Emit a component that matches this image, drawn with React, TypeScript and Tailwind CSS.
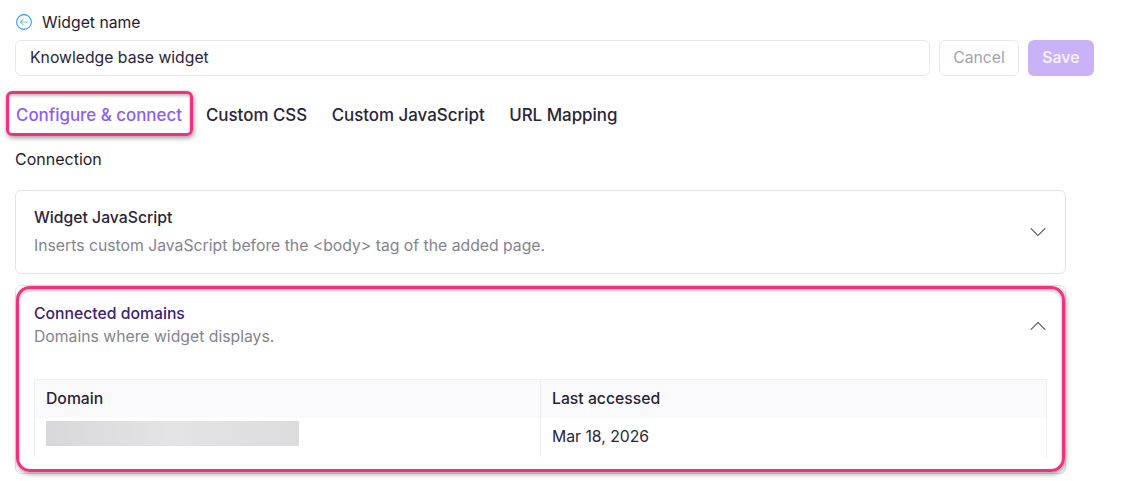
import { ChevronDown, ChevronUp } from 'lucide-react';

const highlight = 'pointer-events-none absolute border-[3px] border-[#f1317f] shadow-[1px_2px_5px_rgba(0,0,0,0.4),inset_0_2px_3px_rgba(0,0,0,0.25)]';

function BackIcon() {
    return (
        <svg width="16" height="16" viewBox="0 0 16 16" fill="none" stroke="#2e9bf0" strokeWidth="1.1" strokeLinecap="round" strokeLinejoin="round">
            <circle cx="8" cy="8" r="7.4" />
            <path d="M11.8 8H4.4M7 5.4 4.4 8 7 10.6" stroke="#7cc0f5" />
        </svg>
    );
}

export default function App() {
    return (
        <div className="relative h-[481px] w-[1144px] overflow-hidden bg-white pl-[15px] font-['Inter',sans-serif] text-[15.75px] text-[#1f1b2e]">
            <div className="flex h-[40px] items-start pt-[14px] pl-px">
                <BackIcon />
                <span className="ml-[10px] leading-[17px]">Widget name</span>
            </div>

            <div className="flex w-[1079px] gap-[9px]">
                <div className="flex h-[36px] flex-1 items-center rounded-md border border-[#e8e8ec] pl-[14px] text-[#2a2438]">
                    Knowledge base widget
                </div>
                <button className="h-[36px] w-[80px] rounded-md border border-[#e8e8ec] text-[#a3a3ab]">Cancel</button>
                <button className="h-[36px] w-[66px] rounded-md bg-[#c9b2f7] font-semibold text-[#f6f1fe]">Save</button>
            </div>

            <div className="mt-[25px] flex h-[48px] w-fit items-start text-[16.9px] font-medium leading-[28px] text-[#2a2438]">
                <span className="ml-px mr-[24px] border-b border-[#7c3aed] pb-[5px] text-[#8b5cf6]">Configure &amp; connect</span>
                <span className="mr-[24.5px]">Custom CSS</span>
                <span className="mr-[24.5px]">Custom JavaScript</span>
                <span>URL Mapping</span>
            </div>

            <p className="text-[16px] leading-[20px]">Connection</p>

            <div className="mt-[21px] flex h-[84px] w-[1051px] items-center justify-between rounded-md border border-[#e4e3ea] pl-[18px] pr-[13px]">
                <div>
                    <p className="font-medium leading-[20px] text-[#2a2438]">Widget JavaScript</p>
                    <p className="mt-[8px] leading-[20px] text-[#85838f]">Inserts custom JavaScript before the &lt;body&gt; tag of the added page.</p>
                </div>
                <ChevronDown size={28} strokeWidth={0.9} className="text-[#3a2a66]" />
            </div>

            <div className="mt-[11px] h-[189px] w-[1051px] rounded-md border border-[#e4e3ea] pl-[18px] pr-[18px] pt-[18px]">
                <div className="flex h-[75px] items-start justify-between">
                    <div>
                        <p className="font-medium leading-[20px] text-[#3b2270]">Connected domains</p>
                        <p className="mt-[3px] leading-[20px] text-[#85838f]">Domains where widget displays.</p>
                    </div>
                    <ChevronUp size={28} strokeWidth={0.9} className="-mr-[5px] mt-[8px] text-[#3a2a66]" />
                </div>
                <div className="h-[78px] border-x border-t border-[#f0f0f3] border-b-[#f5f5f7]">
                    <div className="grid h-[38px] grid-cols-[506px_1fr] bg-[#fafafc] font-medium text-[#2a2438]">
                        <div className="flex items-center border-r border-[#eeeef1] pl-[11px]">Domain</div>
                        <div className="flex items-center pl-[11px]">Last accessed</div>
                    </div>
                    <div className="grid h-[39px] grid-cols-[506px_1fr] text-[#2a2438]">
                        <div className="border-r border-[#f3f3f5] pl-[11px] pt-[3px]">
                            <div className="h-[25px] w-[253px] bg-linear-to-r from-[#d8d8db] via-[#e4e4e6] to-[#dcdcdf]" />
                        </div>
                        <div className="flex items-center pb-[2px] pl-[11px]">Mar 18, 2026</div>
                    </div>
                </div>
            </div>

            <div className={`${highlight} left-[6px] top-[91px] h-[45px] w-[187px] rounded-[6px]`} />
            <div className={`${highlight} left-[16px] top-[286px] h-[186px] w-[1049px] rounded-[14px]`} />
        </div>
    );
}
